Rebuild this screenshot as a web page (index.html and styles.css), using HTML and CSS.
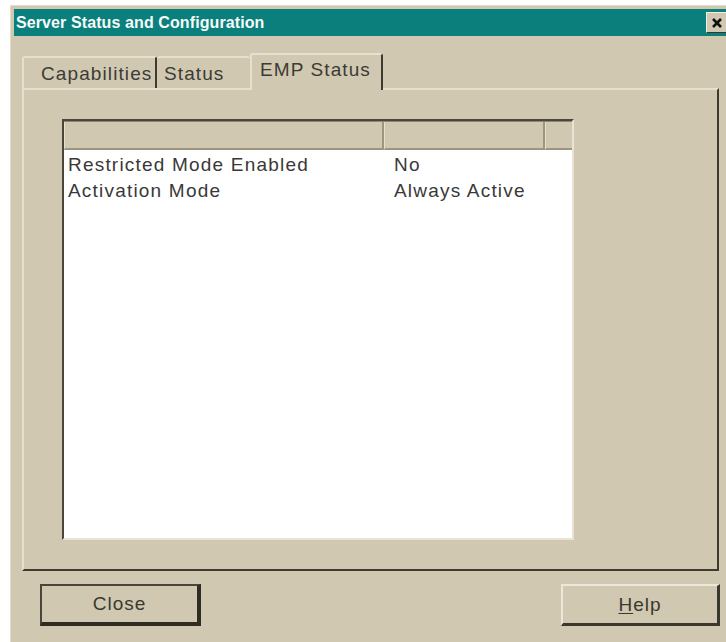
FILE: index.html
```html
<!DOCTYPE html>
<html>
<head>
<meta charset="utf-8">
<link rel="stylesheet" href="styles.css">
</head>
<body>
<div class="dialog">
  <div class="titlebar">
    <span class="title">Server Status and Configuration</span>
    <button class="close-btn" aria-label="Close">
      <svg width="12" height="12" viewBox="0 0 12 12"><path d="M2 2 L10 10 M10 2 L2 10" stroke="#111" stroke-width="2.6"/></svg>
    </button>
  </div>

  <div class="tabs">
    <div class="tab tab-first">Capabilities</div>
    <div class="tab tab-mid">Status</div>
    <div class="tab tab-active">EMP Status</div>
  </div>

  <div class="panel">
    <div class="listview">
      <div class="lv-header">
        <div class="lv-col c1"></div>
        <div class="lv-col c2"></div>
        <div class="lv-col c3"></div>
      </div>
      <div class="lv-body">
        <div class="lv-row"><span class="cell c1">Restricted Mode Enabled</span><span class="cell c2">No</span></div>
        <div class="lv-row"><span class="cell c1">Activation Mode</span><span class="cell c2">Always Active</span></div>
      </div>
    </div>
  </div>

  <div class="buttons">
    <button class="btn btn-default">Close</button>
    <button class="btn"><u>H</u>elp</button>
  </div>
</div>
</body>
</html>
```
FILE: styles.css
```css
html, body {
  margin: 0;
  padding: 0;
  background: #ffffff;
  overflow: hidden;
}

body {
  width: 726px;
  height: 642px;
  font-family: "Liberation Sans", Arial, sans-serif;
}

.dialog {
  margin: 5px 0 0 10px;
  width: 716px;
  height: 637px;
  background: #d0c8b1;
  border-top: 1px solid #e2dccb;
  border-left: 1px solid #e2dccb;
  box-sizing: border-box;
  padding: 3px 0 0 3px;
}

.titlebar {
  height: 27px;
  background: #0b7f7b;
  display: flex;
  align-items: center;
  justify-content: space-between;
}

.title {
  color: #f4fbfa;
  font-weight: bold;
  font-size: 16px;
  padding-left: 2px;
  letter-spacing: 0.1px;
}

.close-btn {
  width: 22px;
  height: 21px;
  margin-right: -2px;
  padding: 0;
  background: #d0c8b1;
  border: 1px solid;
  border-color: #f2eee2 #3a372e #3a372e #f2eee2;
  display: flex;
  align-items: center;
  justify-content: center;
}

/* property-sheet tab strip */
.tabs {
  display: flex;
  align-items: flex-end;
  margin: 16px 0 0 8px;
  height: 36px;
  color: #3c3b35;
  font-size: 19px;
  letter-spacing: 1.1px;
  white-space: nowrap;
}

.tab {
  box-sizing: border-box;
  height: 32px;
  padding-top: 5px;
  border-top: 2px solid #e6e0cf;
  border-left: 2px solid #e6e0cf;
  border-radius: 3px 3px 0 0;
}

.tab-first {
  width: 135px;
  padding-left: 17px;
  border-right: 2px solid #3d3a30;
}

.tab-mid {
  width: 93px;
  padding-left: 7px;
  border-left: none;
}

.tab-active {
  width: 133px;
  height: 37px;
  padding-top: 4px;
  padding-left: 8px;
  border-right: 2px solid #3d3a30;
  margin-bottom: -2px;
  position: relative;
  background: #d0c8b1;
  z-index: 1;
}

.panel {
  margin-left: 8px;
  width: 697px;
  height: 483px;
  box-sizing: border-box;
  border-top: 2px solid #e6e0cf;
  border-left: 2px solid #e6e0cf;
  border-right: 2px solid #3d3a30;
  border-bottom: 2px solid #3d3a30;
  padding: 29px 0 0 38px;
}

/* report-style list view */
.listview {
  width: 512px;
  height: 421px;
  box-sizing: border-box;
  border-top: 2px solid #4a463b;
  border-left: 2px solid #4a463b;
  border-right: 2px solid #e8e3d4;
  border-bottom: 2px solid #e8e3d4;
  background: #ffffff;
  display: flex;
  flex-direction: column;
}

.lv-header {
  display: flex;
  height: 28px;
  background: #d0c8b1;
  border-top: 1px solid #8d8773;
  flex-shrink: 0;
}

.lv-col {
  box-sizing: border-box;
  height: 100%;
  border-bottom: 2px solid #9c957f;
  border-right: 2px solid #9c957f;
  border-left: 1px solid #e4dfcf;
}

.lv-col.c1 { width: 320px; }
.lv-col.c2 { width: 161px; }
.lv-col.c3 { flex: 1; border-right: none; }

.lv-body {
  padding-top: 2px;
  color: #3a3937;
  font-size: 19px;
  letter-spacing: 1.2px;
  white-space: nowrap;
}

.lv-row {
  display: flex;
  height: 26px;
  align-items: center;
}

.cell.c1 {
  width: 322px;
  padding-left: 4px;
}

.cell.c2 {
  padding-left: 4px;
}

.buttons {
  display: flex;
  justify-content: space-between;
  margin: 13px 0 0 26px;
  width: 680px;
}

.btn {
  box-sizing: border-box;
  width: 159px;
  height: 42px;
  background: #d0c8b1;
  font-family: "Liberation Sans", Arial, sans-serif;
  font-size: 19px;
  color: #3a382f;
  letter-spacing: 1px;
  border-top: 2px solid #ece7d8;
  border-left: 2px solid #ece7d8;
  border-right: 3px solid #3a372e;
  border-bottom: 3px solid #3a372e;
  padding: 0;
}

.btn-default {
  width: 161px;
  border-top: 2px solid #4a463b;
  border-left: 2px solid #4a463b;
  border-right: 4px solid #2f2c24;
  border-bottom: 4px solid #2f2c24;
}

.btn u {
  text-decoration-thickness: 1px;
  text-underline-offset: 2px;
}
```
